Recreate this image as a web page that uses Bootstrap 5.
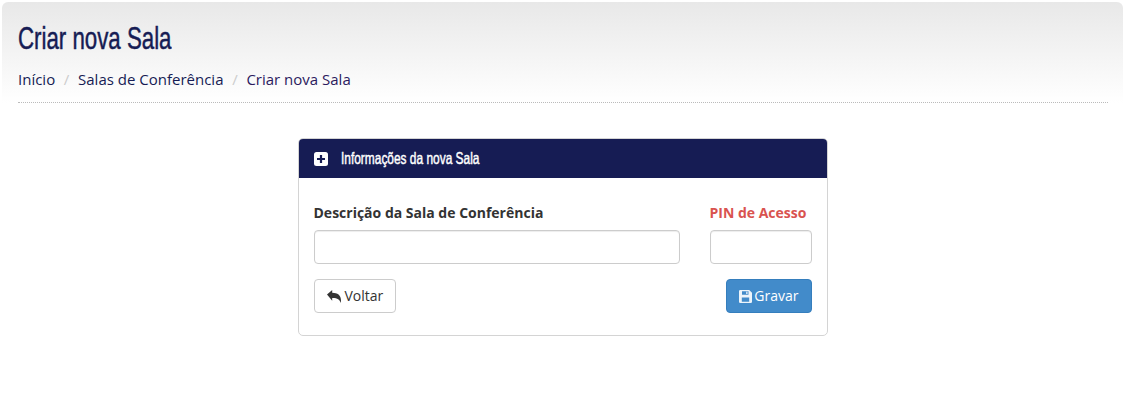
<!DOCTYPE html>
<html lang="pt">
<head>
<meta charset="utf-8">
<title>Criar nova Sala</title>
<link rel="stylesheet" href="https://cdn.jsdelivr.net/npm/bootstrap@5.3.0/dist/css/bootstrap.min.css">
<style>
body{font-family:"Open Sans","Liberation Sans",sans-serif;font-size:14px;color:#333;background:#fff;padding:2px;}
.head-band{background:linear-gradient(to bottom,#e8e8e8 0,#ffffff 100%);border-radius:6px 6px 0 0;padding:0 15px 0 16px;}
.page-title{font-family:"Liberation Sans",sans-serif;font-size:32px;font-weight:400;color:#161c54;line-height:36px;margin:0;padding-top:18px;}
.narrow-text{display:inline-block;transform-origin:left center;white-space:nowrap;}
.page-title .narrow-text{transform:scaleX(.696);-webkit-text-stroke:.5px #161c54;}
.room-head .narrow-text{transform:scaleX(.722);-webkit-text-stroke:.45px #fff;}
.crumbs{--bs-breadcrumb-item-padding-x:8.7px;margin:0;padding:13px 0 13px;font-size:15px;line-height:20px;border-bottom:1px dotted #bbb;}
.crumbs .breadcrumb-item a{color:#161c54;text-decoration:none;}
.crumbs .breadcrumb-item+.breadcrumb-item::before{color:#ccc;}
.crumbs .breadcrumb-item.active{color:#2b1a5e;}
.room-card{width:530px;margin:35px auto 0;border:1px solid #d4d4d4;border-radius:5px;}
.room-head{background:#161c54;color:#fff;height:39px;border:0;border-radius:4px 4px 0 0;padding:0 15px;display:flex;align-items:center;gap:13px;font-family:"Liberation Sans",sans-serif;font-size:16.5px;font-weight:400;}
.room-body{padding:25px 15px 22px;}
.room-label{font-weight:700;font-size:14px;line-height:20px;margin-bottom:7px;color:#333;display:block;}
.room-label.pin{color:#d9534f;}
.room-input{height:34px;border:1px solid #ccc;border-radius:4px;box-shadow:inset 0 1px 1px rgba(0,0,0,.075);}
.desc-col{width:366px;}
.pin-col{width:102px;}
.action-row{margin-top:15px;}
.btn-back,.btn-save{height:34px;font-size:14px;line-height:20px;padding:6px 12px;border-radius:4px;display:inline-flex;align-items:center;gap:4px;}
.btn-back{background:#fff;border:1px solid #ccc;color:#333;}
.btn-save{background:#428bca;border:1px solid #357ebd;color:#fff;gap:2px;}
</style>
</head>
<body>
<header class="head-band">
  <h1 class="page-title"><span class="narrow-text">Criar nova Sala</span></h1>
  <nav aria-label="breadcrumb">
    <ol class="breadcrumb crumbs">
      <li class="breadcrumb-item"><a href="#">Início</a></li>
      <li class="breadcrumb-item"><a href="#">Salas de Conferência</a></li>
      <li class="breadcrumb-item active" aria-current="page">Criar nova Sala</li>
    </ol>
  </nav>
</header>
<main class="card room-card">
  <div class="room-head">
    <svg width="14" height="14" viewBox="0 0 14 14"><rect width="14" height="14" rx="2.5" fill="#fff"/><path d="M7 3v8M3 7h8" stroke="#161c54" stroke-width="2.2"/></svg>
    <span class="narrow-text">Informações da nova Sala</span>
  </div>
  <form class="room-body">
    <div class="d-flex justify-content-between">
      <div class="desc-col">
        <label class="room-label" for="descr">Descrição da Sala de Conferência</label>
        <input id="descr" class="form-control room-input" type="text">
      </div>
      <div class="pin-col">
        <label class="room-label pin" for="pin">PIN de Acesso</label>
        <input id="pin" class="form-control room-input" type="text">
      </div>
    </div>
    <div class="d-flex justify-content-between action-row">
      <button type="button" class="btn btn-back">
        <svg width="14" height="13" viewBox="0 0 14 13"><path d="M0 4.6 5.2 0v2.7C10.5 2.8 14 5 14 10.5c0 1-.2 1.8-.5 2.5-.5-3.7-3.2-5.2-8.3-5.1v2.9z" fill="#333"/></svg>
        Voltar
      </button>
      <button type="button" class="btn btn-save">
        <svg width="13" height="13" viewBox="0 0 13 13"><path fill-rule="evenodd" d="M1.2 0h9L13 2.8v9A1.2 1.2 0 0 1 11.8 13H1.2A1.2 1.2 0 0 1 0 11.8V1.2A1.2 1.2 0 0 1 1.2 0zM3 1.2v3.6h6.5V1.2zM2.8 7.5v4.3h7.4V7.5zM7.2 1.8h1.3v2.3H7.2z" fill="#fff" fill-opacity=".9"/></svg>
        Gravar
      </button>
    </div>
  </form>
</main>
<script src="https://cdn.jsdelivr.net/npm/bootstrap@5.3.0/dist/js/bootstrap.bundle.min.js"></script>
</body>
</html>
